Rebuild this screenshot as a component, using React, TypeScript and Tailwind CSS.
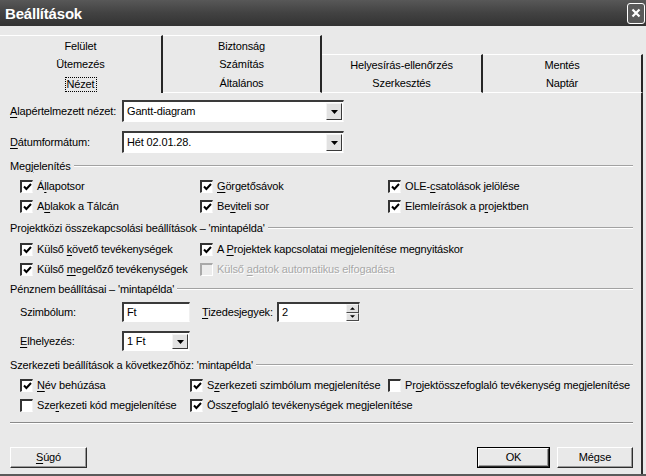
import type { ReactNode } from "react";

// Text with one underlined access-key letter, Windows style.
function hotkey(text: string, at = -1): ReactNode {
  if (at < 0) return text;
  return (
    <>
      {text.slice(0, at)}
      <span className="underline decoration-1 underline-offset-[2px]">{text[at]}</span>
      {text.slice(at + 1)}
    </>
  );
}

function TitleBar() {
  return (
    <div className="flex h-[26px] shrink-0 items-center justify-between bg-gradient-to-b from-[#585858] via-[#424242] to-[#333333] pl-[5px] pr-[1px]">
      <span className="text-[15px] font-bold leading-none tracking-[-0.2px] text-white">Beállítások</span>
      <div className="flex h-[21px] w-[18px] items-center justify-center rounded-[3px] border-[1.5px] border-white bg-[#5a5a5a]">
        <svg width="10" height="10" viewBox="0 0 10 10">
          <path d="M1.5 1.5 L8.5 8.5 M8.5 1.5 L1.5 8.5" stroke="white" strokeWidth="2.2" />
        </svg>
      </div>
    </div>
  );
}

function Tab({
  label,
  width,
  top = false,
  bottom = false,
  selected = false,
}: {
  label: string;
  width: string;
  top?: boolean;
  bottom?: boolean;
  selected?: boolean;
}) {
  return (
    <div
      className={`flex h-full ${width} items-center justify-center border-r-2 border-r-[#262626] pt-[2px] ${
        top ? "border-t border-t-white" : ""
      } ${bottom ? "border-b border-b-white" : ""}`}
    >
      {selected ? (
        <span className="border border-dotted border-black px-[1px] py-[1px]">{label}</span>
      ) : (
        <span>{label}</span>
      )}
    </div>
  );
}

function TabStrip() {
  return (
    <div className="flex flex-col">
      <div className="flex h-[19px]">
        <Tab label="Felület" width="w-[163px]" top />
        <Tab label="Biztonság" width="w-[159px]" top />
      </div>
      <div className="flex h-[19px]">
        <Tab label="Ütemezés" width="w-[163px]" />
        <Tab label="Számítás" width="w-[159px]" />
        <Tab label="Helyesírás-ellenőrzés" width="w-[161px]" top />
        <Tab label="Mentés" width="w-[160px]" top />
      </div>
      <div className="flex h-[20px]">
        <Tab label="Nézet" width="w-[163px]" selected />
        <Tab label="Általános" width="w-[159px]" bottom />
        <Tab label="Szerkesztés" width="w-[161px]" bottom />
        <Tab label="Naptár" width="w-[160px]" bottom />
      </div>
    </div>
  );
}

function CheckBox({ checked = false, disabled = false }: { checked?: boolean; disabled?: boolean }) {
  return (
    <span
      className={`flex h-[13px] w-[13px] shrink-0 items-center justify-center border-b border-l-2 border-r border-t-2 ${
        disabled
          ? "border-b-white border-l-[#a9a9a9] border-r-white border-t-[#a9a9a9] bg-[#ececec]"
          : "border-b-white border-l-[#333] border-r-[#f2f2f2] border-t-[#333] bg-white"
      }`}
    >
      {checked && (
        <svg width="9" height="8" viewBox="0 0 9 8">
          <path d="M1 3.5 L3.4 6 L8 1" stroke="black" strokeWidth="2" fill="none" />
        </svg>
      )}
    </span>
  );
}

function Option({
  text,
  at = -1,
  checked = false,
  disabled = false,
}: {
  text: string;
  at?: number;
  checked?: boolean;
  disabled?: boolean;
}) {
  return (
    <div className="flex h-[20px] items-center gap-[4px] whitespace-nowrap">
      <CheckBox checked={checked} disabled={disabled} />
      <span className={disabled ? "text-[#a8a8a8] [text-shadow:1px_1px_0_#ffffff]" : ""}>{hotkey(text, at)}</span>
    </div>
  );
}

function GroupHeader({ children }: { children: ReactNode }) {
  return (
    <div className="flex h-[14px] items-center pl-[10px]">
      <span className="whitespace-nowrap">{children}</span>
      <div className="ml-[3px] h-[2px] flex-1 border-b border-t border-b-white border-t-[#a2a2a2]" />
    </div>
  );
}

function DropButton() {
  return (
    <div className="my-[1px] mr-[1px] flex h-[calc(100%-2px)] w-[16px] items-center justify-center border-b border-l border-r border-t border-b-[#3a3a3a] border-l-[#f4f4f4] border-r-[#3a3a3a] border-t-[#f4f4f4] bg-[#e2e2e2]">
      <svg width="7" height="4" viewBox="0 0 7 4">
        <path d="M0 0 H7 L3.5 4 Z" fill="black" />
      </svg>
    </div>
  );
}

function ComboBox({ value, width }: { value: string; width: string }) {
  return (
    <div
      className={`flex h-full ${width} items-center border-b border-l-2 border-r border-t-2 border-b-white border-l-[#3a3a3a] border-r-[#f0f0f0] border-t-[#3a3a3a] bg-white`}
    >
      <span className="flex-1 truncate pl-[3px]">{value}</span>
      <DropButton />
    </div>
  );
}

function TextBox({ value, width, spinner = false }: { value: string; width: string; spinner?: boolean }) {
  return (
    <div
      className={`flex h-full ${width} items-center border-b border-l-2 border-r border-t-2 border-b-white border-l-[#3a3a3a] border-r-[#f0f0f0] border-t-[#3a3a3a] bg-white`}
    >
      <span className="flex-1 pl-[3px]">{value}</span>
      {spinner && (
        <div className="flex h-full w-[13px] flex-col">
          {["M0 3 L3 0 L6 3 Z", "M0 0 H6 L3 3 Z"].map((d) => (
            <div
              key={d}
              className="flex flex-1 items-center justify-center border-b border-l border-r border-t border-b-[#4a4a4a] border-l-[#f4f4f4] border-r-[#4a4a4a] border-t-[#f4f4f4] bg-[#e2e2e2]"
            >
              <svg width="5" height="3" viewBox="0 0 6 3">
                <path d={d} fill="black" />
              </svg>
            </div>
          ))}
        </div>
      )}
    </div>
  );
}

function ViewPage() {
  return (
    <div className="flex flex-col pr-[8px]">
      <div className="mt-[7px] flex h-[22px] items-center pl-[10px]">
        <span className="w-[112px]">{hotkey("Alapértelmezett nézet:", 0)}</span>
        <ComboBox value="Gantt-diagram" width="w-[222px]" />
      </div>
      <div className="mt-[9px] flex h-[22px] items-center pl-[10px]">
        <span className="w-[112px]">{hotkey("Dátumformátum:", 0)}</span>
        <ComboBox value="Hét 02.01.28." width="w-[222px]" />
      </div>

      <div className="mt-[6px]">
        <GroupHeader>{hotkey("Megjelenítés", 3)}</GroupHeader>
      </div>
      <div className="mt-[3px] grid grid-cols-[180px_188px_1fr] pl-[20px]">
        <Option text="Állapotsor" at={1} checked />
        <Option text="Görgetősávok" at={0} checked />
        <Option text="OLE-csatolások jelölése" at={4} checked />
        <Option text="Ablakok a Tálcán" at={1} checked />
        <Option text="Beviteli sor" at={2} checked />
        <Option text="Elemleírások a projektben" at={16} checked />
      </div>

      <div className="mt-[5px]">
        <GroupHeader>Projektközi összekapcsolási beállítások – 'mintapélda'</GroupHeader>
      </div>
      <div className="mt-[4px] grid grid-cols-[180px_1fr] pl-[20px]">
        <Option text="Külső követő tevékenységek" at={6} checked />
        <Option text="A Projektek kapcsolatai megjelenítése megnyitáskor" at={2} checked />
        <Option text="Külső megelőző tevékenységek" at={6} checked />
        <Option text="Külső adatok automatikus elfogadása" at={6} disabled />
      </div>

      <div className="mt-[3px]">
        <GroupHeader>Pénznem beállításai – 'mintapélda'</GroupHeader>
      </div>
      <div className="mt-[6px] flex h-[20px] items-center pl-[20px]">
        <span className="w-[102px]">Szimbólum:</span>
        <TextBox value="Ft" width="w-[68px]" />
        <span className="ml-[12px] w-[75px]">{hotkey("Tizedesjegyek:", 0)}</span>
        <TextBox value="2" width="w-[83px]" spinner />
      </div>
      <div className="mt-[9px] flex h-[20px] items-center pl-[20px]">
        <span className="w-[102px]">{hotkey("Elhelyezés:", 0)}</span>
        <ComboBox value="1 Ft" width="w-[68px]" />
      </div>

      <div className="mt-[7px]">
        <GroupHeader>Szerkezeti beállítások a következőhöz: 'mintapélda'</GroupHeader>
      </div>
      <div className="mt-[3px] grid grid-cols-[170px_198px_1fr] pl-[20px]">
        <Option text="Név behúzása" at={0} checked />
        <Option text="Szerkezeti szimbólum megjelenítése" at={1} checked />
        <Option text="Projektösszefoglaló tevékenység megjelenítése" at={2} />
        <Option text="Szerkezeti kód megjelenítése" at={3} />
        <Option text="Összefoglaló tevékenységek megjelenítése" at={4} checked />
      </div>

      <div className="ml-[10px] mt-[7px] h-[2px] border-b border-t border-b-white border-t-[#8a8a8a]" />
    </div>
  );
}

function PushButton({ children, width, isDefault = false }: { children: ReactNode; width: string; isDefault?: boolean }) {
  return (
    <div className={`${width} h-[21px] ${isDefault ? "border border-black" : ""}`}>
      <div className="flex h-full w-full items-center justify-center border-b border-l border-r border-t border-b-[#2e2e2e] border-l-white border-r-[#2e2e2e] border-t-white bg-[#e9e9e9] shadow-[inset_-1px_-1px_0_#9a9a9a]">
        {children}
      </div>
    </div>
  );
}

export default function App() {
  return (
    <div className="flex h-[476px] w-[646px] flex-col overflow-hidden border-b-2 border-b-[#5a5a5a] bg-[#e9e9e9] font-['Liberation_Sans',Arial,sans-serif] text-[11px] leading-none tracking-[-0.15px] text-black">
      <TitleBar />
      <div className="flex flex-1 flex-col pt-[9px]">
        <TabStrip />
        <div className="flex w-[643px] flex-1 flex-col border-r-2 border-r-[#2c2c2c]">
          <ViewPage />
          <div className="mt-[23px] flex items-center pl-[10px] pr-[8px]">
            <PushButton width="w-[77px]">{hotkey("Súgó", 0)}</PushButton>
            <div className="flex-1" />
            <PushButton width="w-[73px]" isDefault>
              OK
            </PushButton>
            <div className="w-[7px]" />
            <PushButton width="w-[76px]">Mégse</PushButton>
          </div>
        </div>
      </div>
    </div>
  );
}
